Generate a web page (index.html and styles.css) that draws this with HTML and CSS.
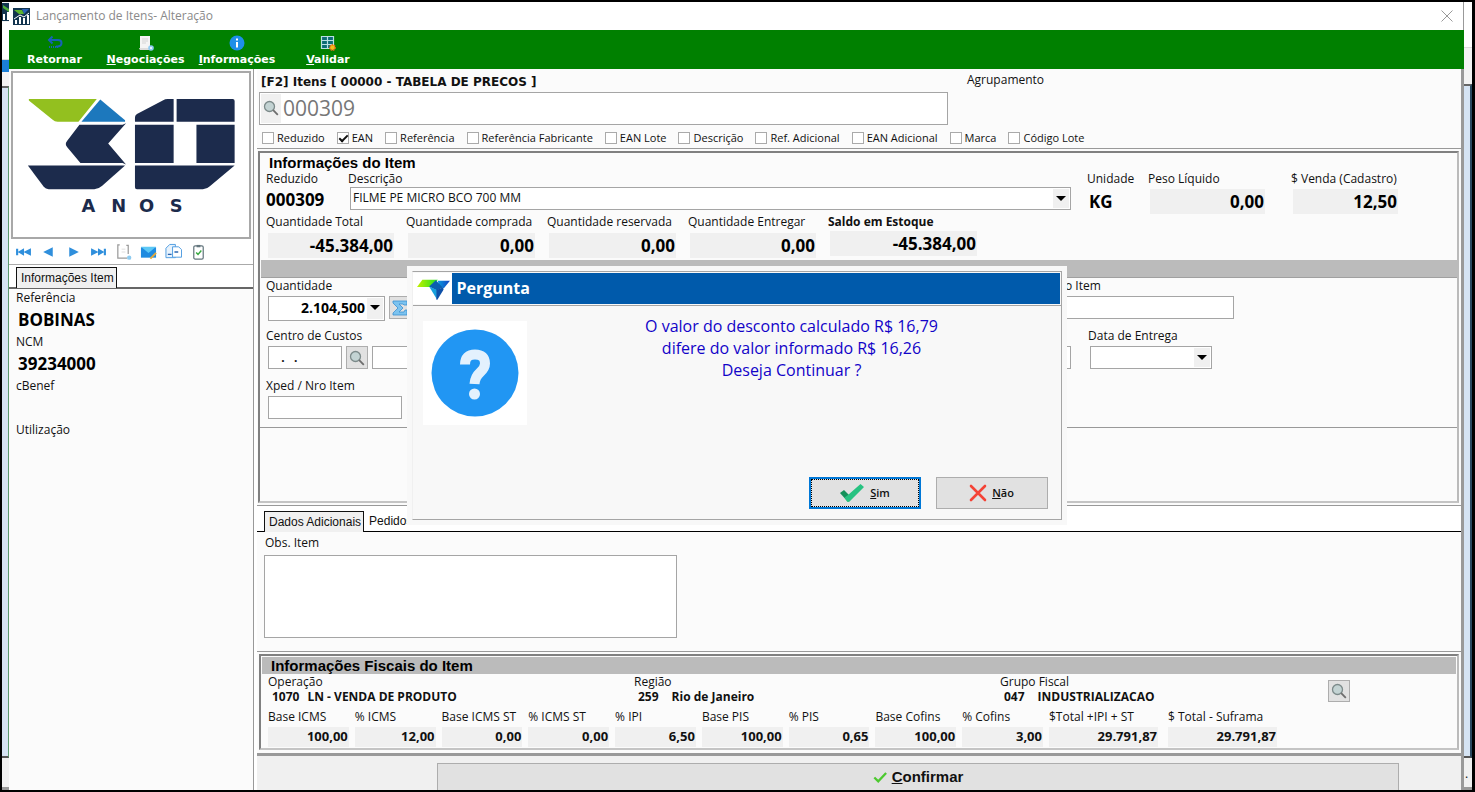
FILE: index.html
```html
<!DOCTYPE html>
<html lang="pt-BR">
<head>
<meta charset="utf-8">
<title>Lançamento de Itens- Alteração</title>
<link rel="stylesheet" href="styles.css">
</head>
<body>
<svg class="defs" aria-hidden="true">
  <symbol id="lens" viewBox="0 0 16 16"><circle cx="6.5" cy="6.5" r="5" fill="#c3d3d3" stroke="#7c8a8a" stroke-width="1.3"/><path d="M10.2 10.2l4.6 4.6" stroke="#6d6d6d" stroke-width="1.8"/></symbol>
</svg>
<div class="desktop">
  <div class="strip strip-left" aria-hidden="true">
    <svg class="strip-icon" viewBox="0 0 7 18"><path fill="#12344f" d="M0 0h7v18H0z"/><path fill="#4fae3a" d="M1 2l6 4v3L1 5z"/><path fill="#fff" d="M1 11h2v6H1zM5 9h2v8H5z"/></svg>
    <div class="strip-menu"></div>
    <div class="strip-mark"></div>
    <div class="strip-sky"></div>
    <div class="strip-foot"></div>
  </div>

  <div class="window">
    <header class="titlebar">
      <svg class="app-icon" viewBox="0 0 17 17"><path fill="#12344f" d="M0 0h17v17H0z"/><path fill="#2a63b8" d="M9 1h7l-5 5z"/><path fill="#5cb531" d="M1 2h8l2 4H6z"/><path fill="#fff" d="M2 12h2v4H2zM6 9h2v7H6zM10 10h2v6h-2zM14 7h2v9h-2z"/><path d="M1 11l6-4 4 2 5-4" fill="none" stroke="#fff"/></svg>
      <span>Lançamento de Itens- Alteração</span>
      <button class="close" aria-label="Fechar"><svg viewBox="0 0 12 12"><path d="M.5.5l11 11M11.5.5l-11 11" stroke="#999"/></svg></button>
    </header>

    <nav class="toolbar">
      <button class="tool t1"><svg viewBox="0 0 16 16"><path d="M5.500 1.500L2 5l3.500 3.500M2 5h9q3.500 0 3.500 3t-3.500 3.500H9" fill="none" stroke="#1762b5" stroke-width="2"/><path d="M2 12h9" stroke="#1762b5" stroke-width="2" stroke-dasharray="1 1"/></svg>Retornar</button>
      <button class="tool t2"><svg viewBox="0 0 16 16"><path d="M2 1h10v12H2z" fill="#f4f4f4"/><path d="M4 4h6M4 6h6M4 8h4" stroke="#c5c5c5" stroke-width=".7"/><path d="M1 13h11v2H2z" fill="#ddd"/><circle cx="13" cy="13" r="2.800" fill="#8ecbf0"/><circle cx="13" cy="13" r="1" fill="#fff"/></svg><span><u>N</u>egociações</span></button>
      <button class="tool t3"><svg viewBox="0 0 16 16"><circle cx="8" cy="8" r="7.500" fill="#1e8fe8"/><path d="M7 3.500h2v2H7zM7 7h2v5.500H7z" fill="#fff"/></svg><span><u>I</u>nformações</span></button>
      <button class="tool t4"><svg viewBox="0 0 16 16"><path d="M1.500 1.500h12v12h-12z" fill="#0b6c75"/><path d="M1.500 1.500h12v12h-12zM1.500 5.500h12M1.500 9.500h12M7.500 1.500v12" fill="none" stroke="#b8e0e4" stroke-width="1.200"/><circle cx="12.500" cy="12.500" r="2.700" fill="#f3c11b" stroke="#e0661a" stroke-width="1.500" stroke-dasharray="1.500 .8"/></svg><span><u>V</u>alidar</span></button>
    </nav>

    <div class="content">
      <aside class="side">
        <div class="brand">
          <svg viewBox="12 73 238 165">
            <path fill="#93c01f" d="M28 99h68.500L78 122H57q-3 0-5-2L28 100.500z"/>
            <path fill="#1c78bd" d="M100 99.500L125 120.500V122H81z"/>
            <g fill="#1c2b4c">
              <path d="M79 125h43.500l3.500-1.500L108 144l18 21-3.500-1.500H80L66.500 147.500q-2.500-3 0-6z"/>
              <path d="M27 166h98L102 186.500q-4 3.500-8 3.500H48q-3 0-5-2.500z"/>
              <path d="M168 99h6v23h-39v-4.500q0-2 2-3.300l26-13.700q2.500-1.500 5-1.500z"/>
              <path d="M177 99h56.500q2 0 2 2v21H177zM135 125h39v38.500h-39zM197 125h38.500v38.500H197z"/>
              <path d="M135 166h100.500l-25 21q-3 3-7 3h-66.500q-2 0-2-2z"/>
              <text class="brand-text" y="213" x="81 111 139 170">ANOS</text>
            </g>
          </svg>
        </div>
        <div class="nav-icons">
          <button aria-label="Primeiro"><svg viewBox="0 0 16 16"><path fill="#2f8fdc" d="M1 5h2v6H1zM8.500 4.500v7L2.500 8zM15 4.500v7L8 8z"/></svg></button>
          <button aria-label="Anterior"><svg viewBox="0 0 16 16"><path fill="#2f8fdc" d="M12 3.500v9L3 8z"/></svg></button>
          <button aria-label="Próximo"><svg viewBox="0 0 16 16"><path fill="#2f8fdc" d="M4 3.500v9L13 8z"/></svg></button>
          <button aria-label="Último"><svg viewBox="0 0 16 16"><path fill="#2f8fdc" d="M13 5h2v6h-2zM7.500 4.500v7L13.500 8zM1 4.500v7L8 8z"/></svg></button>
          <button aria-label="Nota"><svg viewBox="0 0 18 18"><path d="M5 1.500H3v14h10M12 2h2v9" fill="none" stroke="#9a9a9a" stroke-width="1.300"/><path d="M7 6h4M7 9h4" stroke="#ddd"/><circle cx="15" cy="15" r="2.300" fill="#8ecbf0"/></svg></button>
          <button aria-label="E-mail"><svg viewBox="0 0 18 18"><path fill="#1f8be0" d="M1 4h16v11H1z"/><path fill="#5cc8f5" d="M1 3.500h16L9 10z"/><path d="M11 16l6-6" stroke="#e7a93a" stroke-width="2"/></svg></button>
          <button aria-label="Copiar"><svg viewBox="0 0 18 18"><path d="M5 1h6v14H1V5z" fill="#e7f2fc" stroke="#4b9ae0"/><path d="M8 3.500h6.500l3 3v8H8z" fill="#fff" stroke="#4b9ae0"/><path d="M3 11.500h4M10 9h4" stroke="#2a65b0" stroke-width="1.500"/></svg></button>
          <button aria-label="Conferir"><svg viewBox="0 0 18 18"><rect x="4" y="2.500" width="10" height="14" rx="1.500" fill="#fff" stroke="#64767e" stroke-width="1.300"/><path d="M7 1.500h4v2.500H7z" fill="#64767e"/><path d="M6.500 9.500l2 2 3.500-4" fill="none" stroke="#36a83f" stroke-width="1.500"/></svg></button>
        </div>
        <div class="tabs side-tabs"><button class="tab active">Informações Item</button></div>
        <dl class="info">
          <dt>Referência</dt><dd>BOBINAS</dd>
          <dt>NCM</dt><dd>39234000</dd>
          <dt>cBenef</dt><dd></dd>
          <dt>Utilização</dt><dd></dd>
        </dl>
      </aside>

      <main class="main">
        <section class="search">
          <div class="search-head"><label for="code" class="search-title">[F2] Itens [ 00000 - TABELA DE PRECOS ]</label><span>Agrupamento</span></div>
          <div class="search-box"><span class="lens-cell"><svg><use href="#lens"/></svg></span><input id="code" value="000309"></div>
          <div class="checks">
            <label><input type="checkbox">Reduzido</label>
            <label><input type="checkbox" checked>EAN</label>
            <label><input type="checkbox">Referência</label>
            <label><input type="checkbox">Referência Fabricante</label>
            <label><input type="checkbox">EAN Lote</label>
            <label><input type="checkbox">Descrição</label>
            <label><input type="checkbox">Ref. Adicional</label>
            <label><input type="checkbox">EAN Adicional</label>
            <label><input type="checkbox">Marca</label>
            <label><input type="checkbox">Código Lote</label>
          </div>
        </section>

        <section class="group item">
          <h2>Informações do Item</h2>
          <div class="row-a">
            <div class="field"><label for="red">Reduzido</label><output id="red" class="big">000309</output></div>
            <div class="field"><label for="desc">Descrição</label><span class="combo"><select id="desc"><option>FILME PE MICRO BCO 700 MM</option></select></span></div>
            <div class="field"><label for="uni">Unidade</label><output id="uni" class="big unit">KG</output></div>
            <div class="field"><label for="peso">Peso Líquido</label><output id="peso" class="num">0,00</output></div>
            <div class="field"><label for="venda">$ Venda (Cadastro)</label><output id="venda" class="num">12,50</output></div>
          </div>
          <div class="row-b">
            <div class="field"><label for="qt">Quantidade Total</label><output id="qt" class="num">-45.384,00</output></div>
            <div class="field"><label for="qc">Quantidade comprada</label><output id="qc" class="num">0,00</output></div>
            <div class="field"><label for="qr">Quantidade reservada</label><output id="qr" class="num">0,00</output></div>
            <div class="field"><label for="qe">Quantidade Entregar</label><output id="qe" class="num">0,00</output></div>
            <div class="field stock"><label for="se"><b>Saldo em Estoque</b></label><output id="se" class="num">-45.384,00</output></div>
          </div>
          <div class="band"></div>
          <div class="form">
            <div class="form-row">
              <div class="field"><label for="qtd">Quantidade</label>
                <div class="line"><span class="combo qty"><input id="qtd" value="2.104,500"></span><button class="sq sigma" aria-label="Somar"><svg viewBox="0 0 16 16"><path d="M1 1h14v4h-3L11 4H7l4 4-4 4h5l1-2h2v5H1v-2l5-5-5-5z" fill="#7cc3ef" stroke="#3b8fd0" stroke-width=".8"/></svg></button></div>
              </div>
              <div class="field right"><label for="oitem">o Item</label><input id="oitem" class="box wide"></div>
            </div>
            <div class="form-row">
              <div class="field grow"><label for="cc">Centro de Custos</label>
                <div class="line"><input id="cc" class="box cc" value="  .   ."><button class="sq" aria-label="Pesquisar centro de custos"><svg><use href="#lens"/></svg></button><input class="box rest" aria-label="Descrição do centro de custos"></div>
              </div>
              <div class="field date"><label for="dt">Data de Entrega</label><span class="combo"><select id="dt"><option></option></select></span></div>
            </div>
            <div class="form-row">
              <div class="field"><label for="xped">Xped / Nro Item</label><input id="xped" class="box xped"></div>
            </div>
          </div>
        </section>

        <section class="extra">
          <div class="tabs"><button class="tab active">Dados Adicionais</button><button class="tab">Pedidos de Venda</button></div>
          <div class="obs"><label for="obs">Obs. Item</label><textarea id="obs"></textarea></div>
        </section>

        <section class="group fiscal">
          <h2>Informações Fiscais do Item</h2>
          <div class="ops">
            <div><p>Operação</p><b><span>1070</span><span>LN - VENDA DE PRODUTO</span></b></div>
            <div><p>Região</p><b class="wide-code"><span>259</span><span>Rio de Janeiro</span></b></div>
            <div><p>Grupo Fiscal</p><b class="wide-code"><span>047</span><span>INDUSTRIALIZACAO</span></b></div>
            <button class="sq" aria-label="Pesquisar grupo fiscal"><svg><use href="#lens"/></svg></button>
          </div>
          <div class="taxes">
            <div class="field"><label for="f1">Base ICMS</label><output id="f1">100,00</output></div>
            <div class="field"><label for="f2">% ICMS</label><output id="f2">12,00</output></div>
            <div class="field"><label for="f3">Base ICMS ST</label><output id="f3">0,00</output></div>
            <div class="field"><label for="f4">% ICMS ST</label><output id="f4">0,00</output></div>
            <div class="field"><label for="f5">% IPI</label><output id="f5">6,50</output></div>
            <div class="field"><label for="f6">Base PIS</label><output id="f6">100,00</output></div>
            <div class="field"><label for="f7">% PIS</label><output id="f7">0,65</output></div>
            <div class="field"><label for="f8">Base Cofins</label><output id="f8">100,00</output></div>
            <div class="field"><label for="f9">% Cofins</label><output id="f9">3,00</output></div>
            <div class="field total"><label for="f10">$Total +IPI + ST</label><output id="f10">29.791,87</output></div>
            <div class="field"><label for="f11">$ Total - Suframa</label><output id="f11">29.791,87</output></div>
          </div>
        </section>

        <footer class="footer">
          <button class="confirm"><svg viewBox="0 0 16 16"><path d="M1.500 8.500L6 13 15 3.500" fill="none" stroke="#4cc92f" stroke-width="2.600"/></svg><span><u>C</u>onfirmar</span></button>
        </footer>
      </main>
    </div>
  </div>

  <div class="strip strip-right" aria-hidden="true">
    <div class="strip-menu"></div>
    <div class="strip-sky"></div>
    <div class="strip-foot">.</div>
  </div>
</div>

<div class="modal" role="dialog" aria-labelledby="mt">
  <div class="modal-frame">
    <div class="modal-head">
      <svg class="modal-logo" viewBox="0 0 39 32">
        <defs><linearGradient id="lg"><stop offset="0" stop-color="#c4f000"/><stop offset="1" stop-color="#1fe01f"/></linearGradient><linearGradient id="lb"><stop offset="0" stop-color="#0a9be0"/><stop offset="1" stop-color="#1240c0"/></linearGradient></defs>
        <path fill="url(#lg)" d="M9 7h16l-7 7.500H3.500z"/><path fill="url(#lb)" d="M25 8h12.500L31 16l-5-3z"/><path fill="#0b5fae" d="M16 14l7-6.500 7 7.500-6 3z"/><path fill="#16a0dc" d="M16 14l8 3.500V27z"/><path fill="#0d50a8" d="M23.500 17.500L30 15l1 2-6.500 10.500h-1z"/>
      </svg>
      <h1 id="mt">Pergunta</h1>
    </div>
    <div class="modal-body">
      <svg class="question" viewBox="0 0 104 104"><circle cx="52" cy="52" r="43.500" fill="#2196f3"/><path d="M42 43.500Q42 33.500 52 33.500T62 42.500Q62 47 57 51.500T51.500 63" fill="none" stroke="#e3f1fd" stroke-width="10"/><circle cx="51.500" cy="73" r="5.500" fill="#e3f1fd"/></svg>
      <p>O valor do desconto calculado R$ 16,79<br>difere do valor informado R$ 16,26<br>Deseja Continuar ?</p>
    </div>
    <div class="modal-actions">
      <button class="yes"><svg viewBox="0 0 26 20"><path d="M1 10l4-3 6 6-2 6z" fill="#15915a"/><path d="M8 18.500l-2.500-4L9 12 21.500 1 25 4 10 19z" fill="#27c281"/></svg><span><u>S</u>im</span></button>
      <button class="no"><svg viewBox="0 0 18 18"><path d="M2 2l14 14M16 2L2 16" stroke="#f44336" stroke-width="2.600" stroke-linecap="round"/></svg><span><u>N</u>ão</span></button>
    </div>
  </div>
</div>
</body>
</html>
```
FILE: styles.css
```css
* { box-sizing: border-box; }
body { margin: 0; background: #000; color: #111; font: 12px/16px "Open Sans", "Noto Sans", sans-serif; }
h1, h2, p, dl, dd { margin: 0; }
button, input, select, textarea { font: inherit; color: inherit; border-radius: 0; margin: 0; padding: 0; }
button { background: none; border: 0; }
svg { display: block; flex: none; }
.defs { position: absolute; width: 0; height: 0; }

.desktop { display: flex; min-height: 100vh; padding: 2px 3px 2px 2px; }

/* edges of the parent window */
.strip { display: flex; flex-direction: column; flex: none; background: #f3f3f3; overflow: hidden; }
.strip-left { width: 7px; }
.strip-right { width: 8px; }
.strip-icon { width: 7px; height: 20px; }
.strip-menu { height: 38px; background: #fff; border-bottom: 1px solid #ddd; }
.strip-mark { height: 12px; background: #1b7fd6; }
.strip-sky { flex: 1; margin-top: 14px; background: #d5e3f3; border-top: 2px solid #666; border-right: 1px solid #5d9a70; border-bottom: 2px solid #555; }
.strip-right .strip-menu { height: 46px; }
.strip-right .strip-sky { margin-top: 36px; border-right: 2px solid #29485f; }
.strip-foot { height: 32px; background: #f0f0f0; border-bottom: 3px solid #999; padding: 8px 1px; }

.window { display: flex; flex-direction: column; flex: 1; min-width: 0; background: #fff; }
.titlebar { display: flex; align-items: center; gap: 6px; height: 28px; padding: 0 10px 0 4px; color: #8a8a8a; border-right: 1px solid #999; }
.app-icon { width: 17px; height: 17px; }
.close { margin-left: auto; }
.close svg { width: 12px; height: 12px; }

.toolbar { display: flex; height: 39px; background: #008000; color: #fff; font: bold 11px/14px "DejaVu Sans", sans-serif; }
.tool { display: flex; flex-direction: column; align-items: center; padding-top: 5px; gap: 2px; }
.tool svg { width: 16px; height: 16px; }
.t1 { width: 91px; }
.t2 { width: 91px; }
.t3 { width: 92px; }
.t4 { width: 90px; }

.content { display: flex; flex: 1; min-height: 0; }
.side { width: 245px; flex: none; border-right: 1px solid #999; background: #fbfbfb; display: flex; flex-direction: column; }
.brand { margin: 2px 2px 0; border: 2px solid #a8a8a8; background: #fff; }
.brand svg { width: 100%; height: 164px; }
.brand-text { font: bold 18px "DejaVu Sans", sans-serif; }
.nav-icons { display: flex; align-items: center; height: 26px; padding-left: 6px; gap: 9px; background: #fff; border-bottom: 1px solid #aaa; }
.nav-icons button { width: 16px; display: flex; justify-content: center; }
.nav-icons svg { width: 17px; height: 18px; }

.tabs { display: flex; align-items: flex-end; height: 26px; background: #fff; border-bottom: 1px solid #000; }
.side-tabs { height: 24px; padding-left: 7px; border-bottom: 2px solid #666; }
.tab { height: 20px; padding: 0 5px; font: 12px/20px "Liberation Sans", sans-serif; }
.tab.active { height: 21px; padding: 0 2px 0 4px; background: #f0f0f0; border: 1px solid #111; border-bottom: 0; margin-bottom: -1px; }
.info { padding: 1px 7px; }
.info dt { height: 16px; }
.info dd { height: 28px; padding: 3px 2px 0; font: bold 17px/22px "Open Sans", sans-serif; color: #000; }

.main { flex: 1; min-width: 0; margin-left: 3px; display: flex; flex-direction: column; background: #fbfbfb; border-right: 3px solid #999; }
.search { padding: 4px 2px 0; height: 80px; border-bottom: 1px solid #999; }
.search-head { display: flex; height: 19px; }
.search-title { width: 706px; flex: none; font: bold 12px/18px "DejaVu Sans", sans-serif; padding-left: 2px; }
.search-head > span { padding-left: 2px; line-height: 14px; }
.search-box { display: flex; width: 689px; height: 33px; padding: 1px; border: 1px solid #a5a5a5; background: #fff; }
.lens-cell { width: 20px; background: #f0f0f0; padding: 6px 2px; }
.lens-cell svg, .sq svg { width: 16px; height: 16px; }
.search-box input { flex: 1; border: 0; padding: 0 2px 2px; color: #777; font-size: 21px; line-height: 28px; min-width: 0; }
.checks { display: flex; gap: 12px; padding: 5px 3px 0; white-space: nowrap; font-size: 11px; }
.checks label { display: flex; align-items: center; gap: 3px; }
.checks input { appearance: none; width: 12px; height: 12px; border: 1px solid #aaa; background: #fff; }
.checks input:checked::before { content: ""; display: block; width: 7px; height: 3px; margin: 2px 1px; border: solid #111; border-width: 0 0 2px 2px; transform: rotate(-45deg); }

.group { margin: 2px 2px 0 1px; border: 2px solid #808080; border-right-color: #bbb; border-bottom-color: #c4c4c4; }
.group h2 { font: bold 15px/17px "Liberation Sans", sans-serif; color: #000; }
.item { height: 352px; }
.item h2 { padding: 1px 0 0 9px; }
.field { display: flex; flex-direction: column; min-width: 0; white-space: nowrap; }
.row-a { display: grid; grid-template-columns: 66px 1fr 45px 127px 107px; gap: 16px; padding: 0 59px 0 6px; }
.big { font: bold 17px/25px "Open Sans", sans-serif; color: #000; }
.unit { padding: 2px 2px 0; }
.num { display: block; margin: 2px 0 0 2px; padding-right: 1px; height: 25px; background: #f0f0f0; color: #000; text-align: right; font: bold 17px/26px "Open Sans", sans-serif; }
#peso { width: 115px; }
.combo { position: relative; display: flex; height: 23px; border: 1px solid #a5a5a5; background: #fff; }
.row-a .combo { margin-left: 2px; }
.combo select, .combo input { appearance: none; flex: 1; min-width: 0; border: 0; background: none; padding: 0 2px 2px; }
.combo::before { content: ""; position: absolute; right: 1px; top: 1px; bottom: 1px; width: 16px; background: #f0f0f0; pointer-events: none; }
.combo::after { content: ""; position: absolute; right: 4px; top: 8px; border: solid transparent; border-width: 5px 5px 0; border-top-color: #000; pointer-events: none; }
.row-b { display: grid; grid-template-columns: 128px 129px 129px 128px 149px; gap: 12px; padding: 0 6px; }
.row-b .num { margin-top: 3px; }
.row-b .stock .num { margin-top: 1px; }
.band { margin: 2px 0 0 1px; height: 18px; background: #bbb; border-bottom: 1px solid #a0a0a0; }
.form { height: 150px; border-bottom: 1px solid #999; padding: 0 6px; }
.form-row { display: flex; height: 50px; }
.form .field { gap: 2px; }
.line { display: flex; gap: 4px; padding-left: 2px; }
.box { height: 23px; border: 1px solid #a5a5a5; background: #fff; padding: 0 10px; white-space: pre; }
.qty { width: 117px; height: 25px; }
.qty input { text-align: right; padding-right: 19px; font-weight: bold; font-size: 14px; color: #000; }
.sq { width: 22px; height: 23px; flex: none; display: flex; align-items: center; justify-content: center; background: #e1e1e1; border: 1px solid #adadad; }
.right { margin-left: auto; width: 170px; margin-right: 217px; }
.right label { padding-left: 1px; }
.grow { flex: 1; }
.cc { width: 74px; padding: 0 6px; font-weight: bold; }
.rest { flex: 1; }
.date { width: 124px; margin: 0 239px 0 17px; }
.date .combo { margin-left: 2px; }
.xped { width: 134px; margin-left: 2px; }

.extra { flex: 1; margin-top: 2px; border-top: 1px solid #999; border-bottom: 1px solid #999; }
.extra .tabs { padding-left: 7px; }
.obs { display: flex; flex-direction: column; align-items: flex-start; gap: 4px; padding: 3px 7px 0 8px; }
.obs textarea { width: 413px; height: 83px; border: 1px solid #a5a5a5; background: #fff; margin-left: -1px; resize: none; }

.fiscal { margin-left: 2px; }
.fiscal h2 { background: #bbb; margin: 1px 1px 0; padding-left: 9px; }
.ops { display: grid; grid-template-columns: 366px 366px 328px 23px; padding: 0 0 0 7px; height: 35px; }
.ops p { line-height: 15px; }
.ops b { display: flex; padding-left: 4px; gap: 8px; }
.ops .wide-code { gap: 13px; }
.ops .sq { margin-top: 6px; height: 22px; }
.taxes { display: grid; grid-template-columns: repeat(9, 1fr) 113px 109px; gap: 6px; padding: 0 180px 1px 7px; }
.taxes output { display: block; margin-top: 2px; height: 20px; padding-right: 1px; background: #f0f0f0; text-align: right; font-weight: bold; font-size: 13px; line-height: 19px; }
.total output { width: 109px; }

.footer { margin-top: 3px; border-top: 3px solid #999; background: #f0f0f0; padding: 7px 62px 0 180px; }
.confirm { display: flex; align-items: center; justify-content: center; gap: 5px; width: 100%; height: 27px; background: #e1e1e1; border: 1px solid #adadad; border-bottom: 0; font: bold 15px/20px "Liberation Sans", sans-serif; }
.confirm svg { width: 14px; height: 14px; }

.modal { position: fixed; inset: 0 2px 1px 0; margin: auto; width: 660px; height: 259px; padding: 5px; background: #f8f8f8; }
.modal-frame { display: flex; flex-direction: column; height: 249px; border: 1px solid #a5a5a5; border-left-color: #f0f0f0; }
.modal-head { display: flex; height: 34px; padding: 1px 1px 1px 0; border-bottom: 1px solid #a5a5a5; }
.modal-logo { width: 39px; height: 31px; background: #fff; }
.modal-head h1 { flex: 1; padding-left: 5px; background: #005aab; color: #fff; font: bold 16px/31px "Open Sans", sans-serif; }
.modal-body { display: flex; flex: 1; padding: 15px 4px 0 10px; }
.question { width: 104px; height: 104px; background: #fff; }
.modal-body p { flex: 1; color: #1203c8; text-align: center; font: 500 16px/22px "Open Sans", sans-serif; margin-top: -6px; }
.modal-actions { display: flex; justify-content: flex-end; gap: 15px; padding: 0 13px 10px 0; }
.modal-actions button { display: flex; align-items: center; justify-content: center; gap: 5px; width: 112px; height: 32px; background: #e1e1e1; border: 1px solid #adadad; font: 600 11px/16px "Open Sans", sans-serif; }
.modal-actions .yes { border: 2px solid #0078d7; outline: 1px dotted #000; outline-offset: -3px; }
.yes svg { width: 26px; height: 20px; }
.no svg { width: 18px; height: 18px; }
```
